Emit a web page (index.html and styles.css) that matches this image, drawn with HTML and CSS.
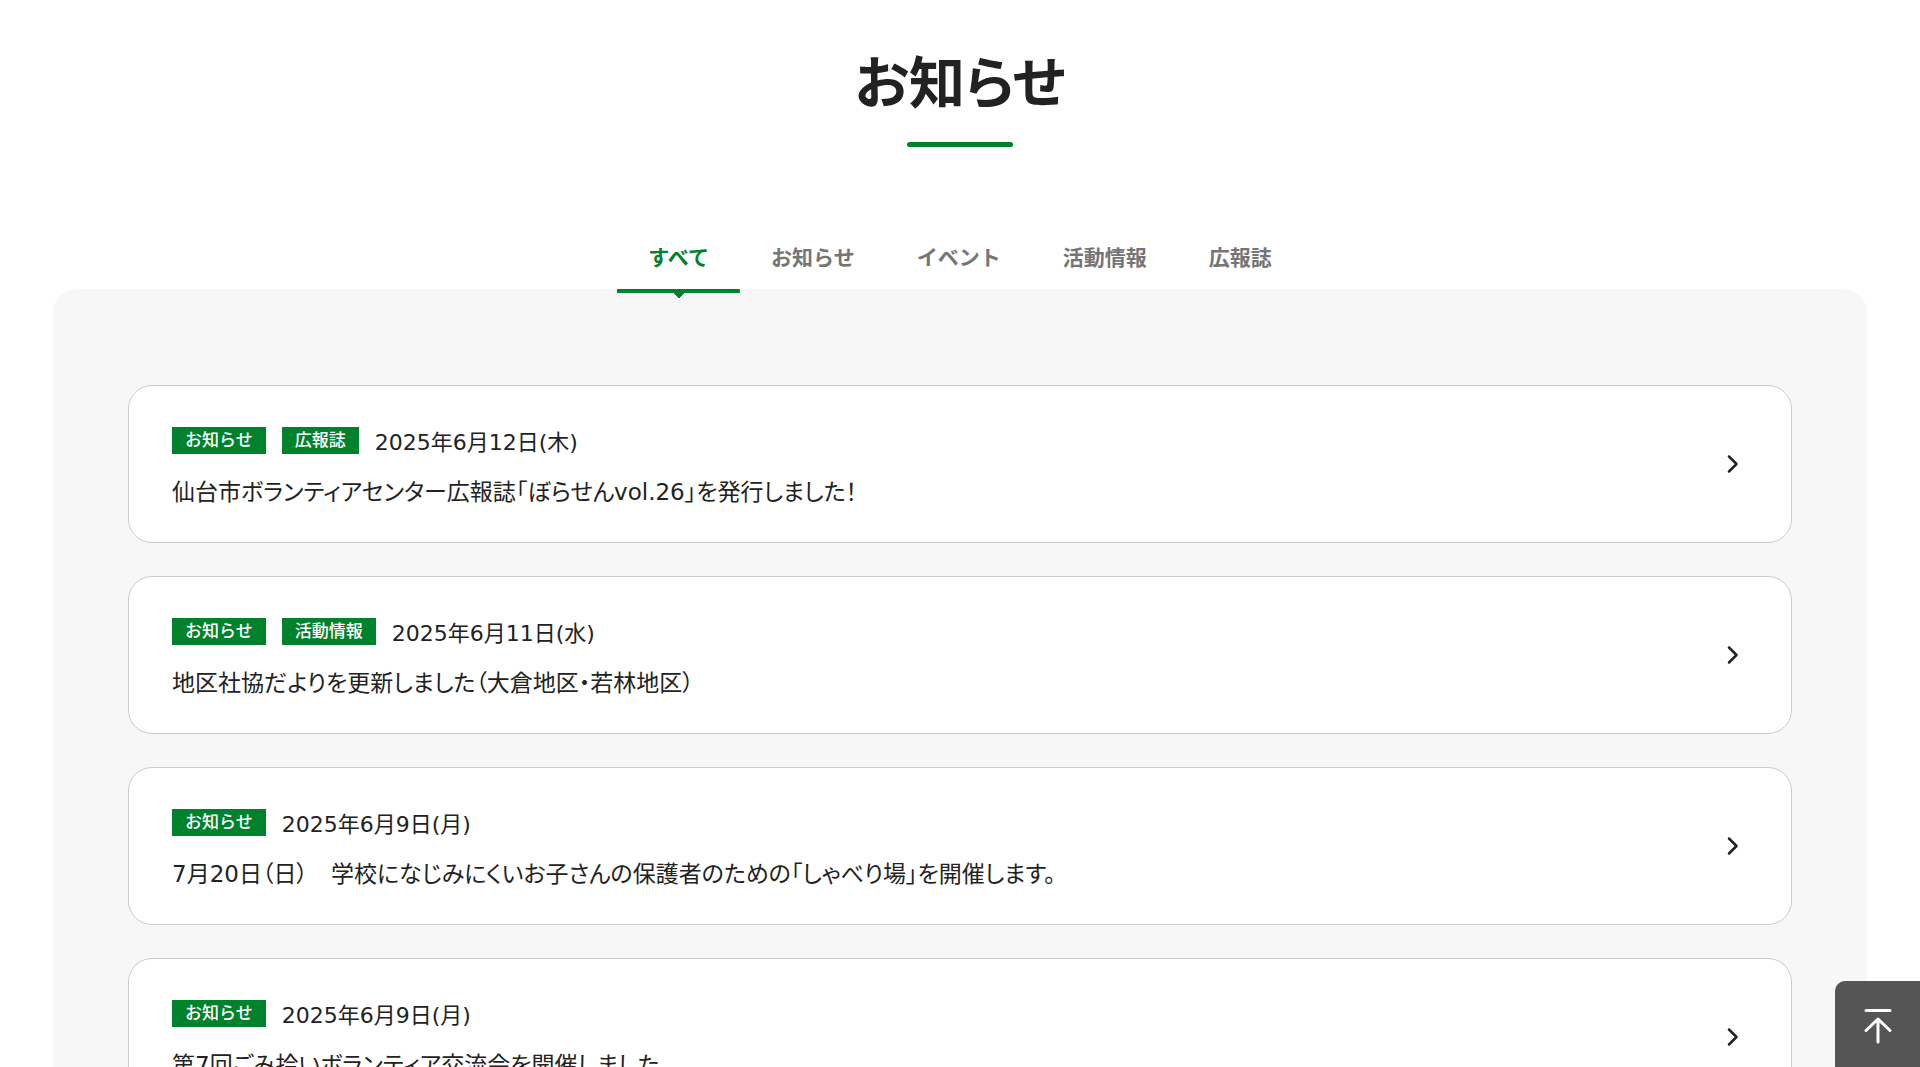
FILE: index.html
```html
<!DOCTYPE html>
<html lang="ja">
<head>
<meta charset="utf-8">
<meta name="viewport" content="width=device-width, initial-scale=1">
<title>お知らせ</title>
<link rel="stylesheet" href="styles.css">
</head>
<body>
<main class="news">
  <h2 class="news-heading">お知らせ</h2>
  <div class="tabs" role="tablist">
    <button class="tab tab-active" type="button" role="tab" aria-selected="true">すべて</button>
    <button class="tab" type="button" role="tab" aria-selected="false">お知らせ</button>
    <button class="tab" type="button" role="tab" aria-selected="false">イベント</button>
    <button class="tab" type="button" role="tab" aria-selected="false">活動情報</button>
    <button class="tab" type="button" role="tab" aria-selected="false">広報誌</button>
  </div>
  <div class="panel" role="tabpanel">
    <ul class="list">
      <li>
        <a class="card" href="#">
          <div class="card-body">
            <div class="meta"><span class="tag">お知らせ</span><span class="tag">広報誌</span><time class="date" datetime="2025-06-12">2025年6月12日(木)</time></div>
            <p class="title">仙台市ボランティアセンター広報誌「ぼらせんvol.26」を発行しました！</p>
          </div>
          <svg class="chevron" viewBox="0 0 12 20" aria-hidden="true"><path d="M2 2.5 9.5 10 2 17.5"/></svg>
        </a>
      </li>
      <li>
        <a class="card" href="#">
          <div class="card-body">
            <div class="meta"><span class="tag">お知らせ</span><span class="tag">活動情報</span><time class="date" datetime="2025-06-11">2025年6月11日(水)</time></div>
            <p class="title">地区社協だよりを更新しました（大倉地区・若林地区）</p>
          </div>
          <svg class="chevron" viewBox="0 0 12 20" aria-hidden="true"><path d="M2 2.5 9.5 10 2 17.5"/></svg>
        </a>
      </li>
      <li>
        <a class="card" href="#">
          <div class="card-body">
            <div class="meta"><span class="tag">お知らせ</span><time class="date" datetime="2025-06-09">2025年6月9日(月)</time></div>
            <p class="title">7月20日（日）　学校になじみにくいお子さんの保護者のための「しゃべり場」を開催します。</p>
          </div>
          <svg class="chevron" viewBox="0 0 12 20" aria-hidden="true"><path d="M2 2.5 9.5 10 2 17.5"/></svg>
        </a>
      </li>
      <li>
        <a class="card" href="#">
          <div class="card-body">
            <div class="meta"><span class="tag">お知らせ</span><time class="date" datetime="2025-06-09">2025年6月9日(月)</time></div>
            <p class="title">第7回ごみ拾いボランティア交流会を開催しました</p>
          </div>
          <svg class="chevron" viewBox="0 0 12 20" aria-hidden="true"><path d="M2 2.5 9.5 10 2 17.5"/></svg>
        </a>
      </li>
    </ul>
  </div>
</main>
<a class="to-top" href="#" aria-label="ページの先頭へ">
  <svg class="to-top-icon" viewBox="0 0 30 36" aria-hidden="true"><path d="M3 2.5H27M15 34V11M3 22.5 15 11 27 22.5"/></svg>
</a>
</body>
</html>
```

FILE: styles.css
```css
* {
  box-sizing: border-box;
}

body {
  margin: 0;
  background: #fff;
  color: #222;
  font-family: "DejaVu Sans", "Noto Sans CJK JP", sans-serif;
}

.news {
  padding: 40px 53px 0;
}

.news-heading {
  display: flex;
  flex-direction: column;
  align-items: center;
  gap: 24px;
  margin: 0;
  font-family: "Noto Sans CJK JP", sans-serif;
  font-feature-settings: "palt";
  font-size: 56px;
  font-weight: 700;
  line-height: 78px;
}

.news-heading::after {
  content: "";
  width: 106px;
  height: 5px;
  border-radius: 3px;
  background: #00812c;
}

.tabs {
  display: flex;
  justify-content: center;
  margin-top: 80px;
}

.tab {
  position: relative;
  padding: 13px 31px 17px;
  border: 0;
  background: none;
  color: #757575;
  font: 700 21px/32px "Noto Sans CJK JP", sans-serif;
  cursor: pointer;
}

.tab-active {
  color: #00812c;
}

.tab-active::after {
  content: "";
  position: absolute;
  top: 100%;
  left: 0;
  width: 100%;
  height: 9px;
  background:
    linear-gradient(#00812c, #00812c) top / 100% 4px no-repeat,
    conic-gradient(from 315deg at 50% 100%, #00812c 90deg, transparent 0) bottom / 12px 6px no-repeat;
}

.panel {
  padding: 96px 75px;
  border-radius: 24px;
  background: #f7f7f7;
}

.list {
  display: flex;
  flex-direction: column;
  gap: 33px;
  margin: 0;
  padding: 0;
  list-style: none;
}

.card {
  display: flex;
  align-items: center;
  justify-content: space-between;
  padding: 0 52px 0 43px;
  border: 1px solid #ccc;
  border-radius: 24px;
  background: #fff;
  color: inherit;
  text-decoration: none;
}

.card-body {
  display: flex;
  flex-direction: column;
  gap: 14px;
  padding: 41px 0 30px;
}

.meta {
  display: flex;
  align-items: flex-start;
  gap: 16px;
}

.tag {
  padding: 0 13px;
  background: #00812c;
  color: #fff;
  font-size: 17px;
  font-weight: 500;
  line-height: 27px;
}

.date {
  font-size: 22px;
  line-height: 31px;
}

.title {
  margin: 0;
  font-feature-settings: "palt";
  font-size: 23px;
  line-height: 40px;
}

.chevron {
  flex: none;
  width: 12px;
  height: 20px;
  fill: none;
  stroke: #222;
  stroke-width: 2.5;
  stroke-linecap: round;
  stroke-linejoin: round;
}

.to-top {
  position: fixed;
  right: 0;
  bottom: 0;
  display: flex;
  justify-content: center;
  width: 85px;
  height: 86px;
  padding-top: 27px;
  border-radius: 10px 0 0 0;
  background: #555;
}

.to-top-icon {
  width: 30px;
  height: 36px;
  fill: none;
  stroke: #fff;
  stroke-width: 3;
  stroke-linecap: round;
  stroke-linejoin: round;
}
```
